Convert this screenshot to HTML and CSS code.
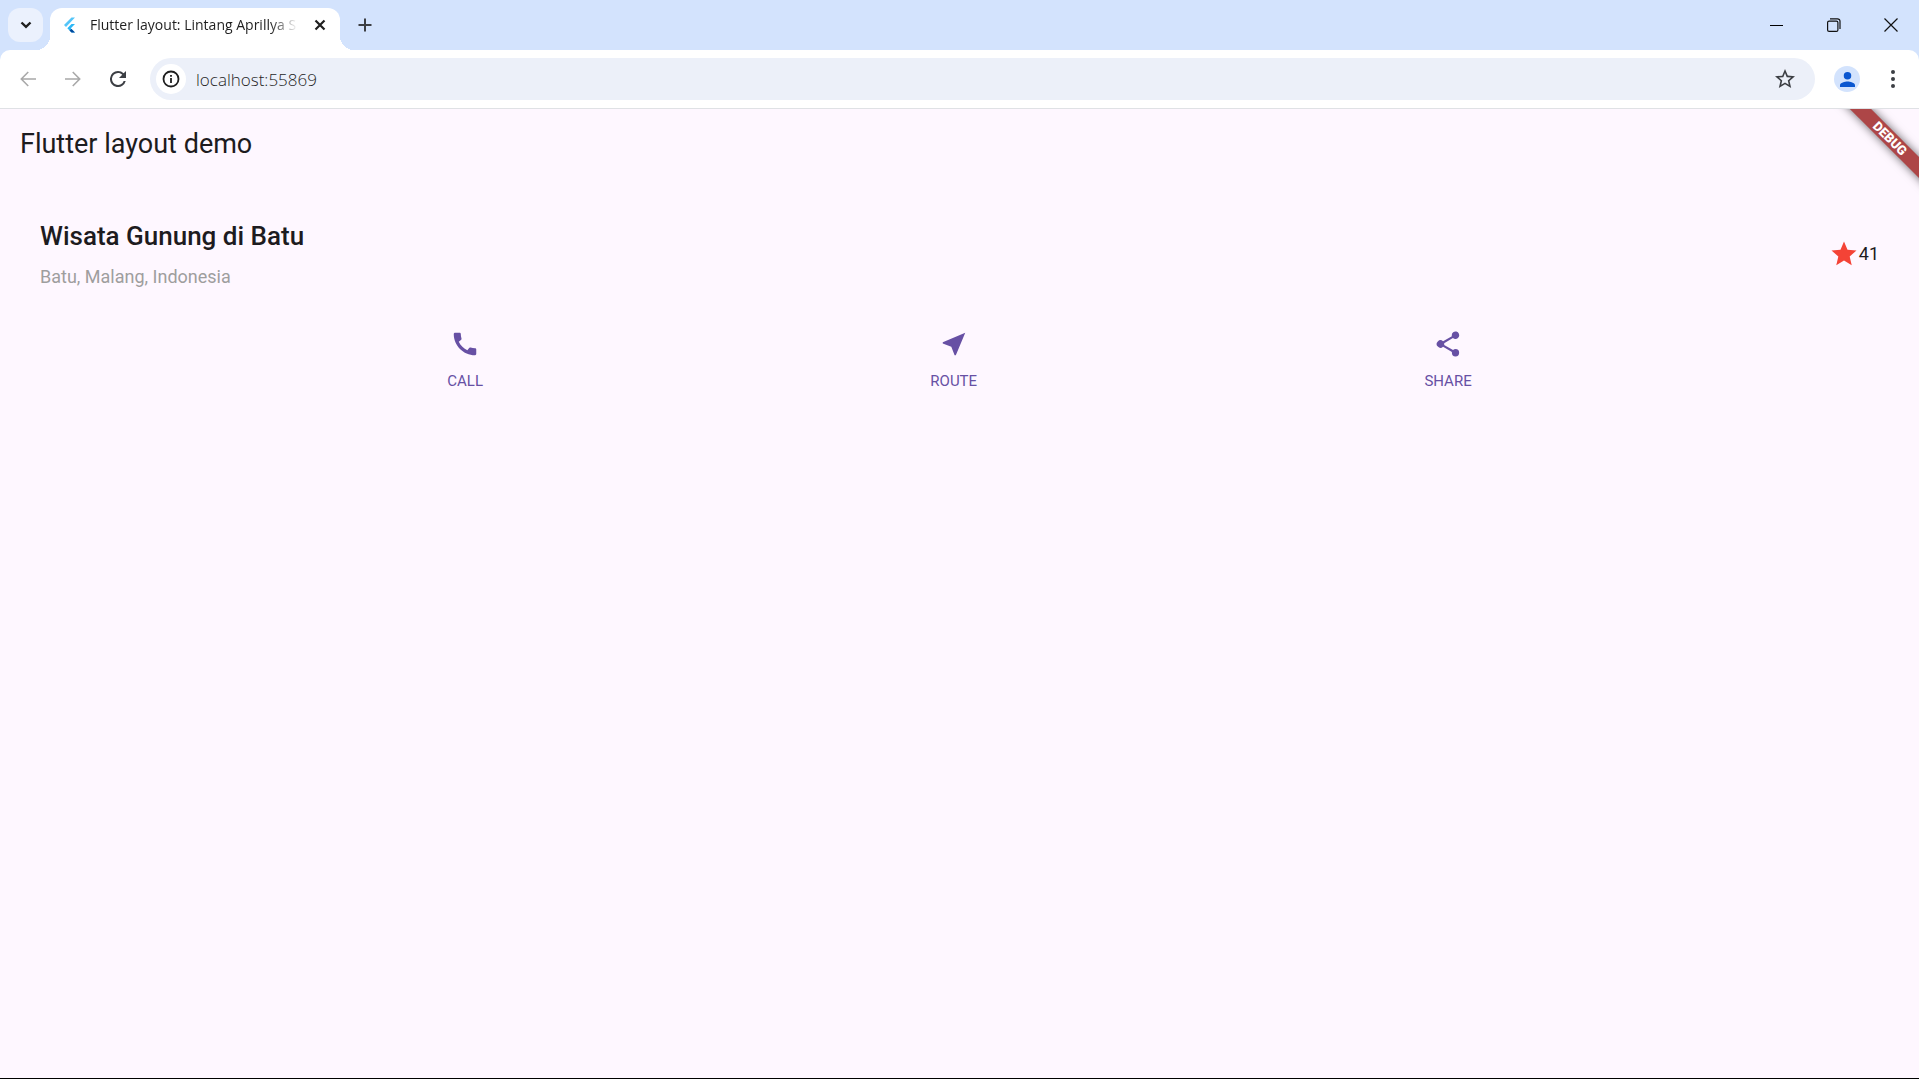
FILE: index.html
```html
<!DOCTYPE html>
<html lang="en">
<head>
<meta charset="utf-8">
<meta name="viewport" content="width=device-width, initial-scale=1">
<title>Flutter layout: Lintang Aprillya S</title>
<link rel="stylesheet" href="styles.css">
</head>
<body>
<header class="browser">
  <div class="tab-strip">
    <button class="tab-search" aria-label="Search tabs"><svg width="12" height="8" viewBox="0 0 12 8"><path d="M1.500 1.500l4.500 4.300 4.500-4.300" fill="none" stroke="#1f1f1f" stroke-width="2.400"/></svg></button>
    <div class="tab">
      <svg class="favicon" width="20" height="20" viewBox="0 0 20 20"><path d="M11.500 2.500H15L6 12 4 10z" fill="#54c5f8"/><path d="M11.500 9H15l-4.200 4.300L15 17.500h-3.500l-4.200-4.200z" fill="#2bb7f6"/><path d="M11.500 17.500H15L11.500 14 9.500 15.500z" fill="#01479b"/></svg>
      <span class="tab-title">Flutter layout: Lintang Aprillya S</span>
      <button class="tab-close" aria-label="Close tab"><svg width="12" height="12" viewBox="0 0 12 12"><path d="M1.500 1.500l9 9M10.500 1.500l-9 9" stroke="#1f1f1f" stroke-width="2.200"/></svg></button>
    </div>
    <button class="new-tab" aria-label="New tab"><svg width="14" height="14" viewBox="0 0 14 14"><path d="M7 .5v13M.5 7h13" stroke="#3c3f44" stroke-width="2"/></svg></button>
    <div class="window-controls">
      <button aria-label="Minimize"><svg width="14" height="14" viewBox="0 0 14 14"><path d="M0 7.500h13" stroke="#000"/></svg></button>
      <button aria-label="Restore"><svg width="14" height="14" viewBox="0 0 14 14" fill="none" stroke="#111" stroke-width="1.200"><rect x=".6" y="3.100" width="10.300" height="10.300" rx="1.500"/><path d="M3 .8h7.500a2.500 2.500 0 0 1 2.500 2.500V11"/></svg></button>
      <button aria-label="Close window"><svg width="14" height="14" viewBox="0 0 14 14"><path d="M.5.5l13 13M13.500.5l-13 13" stroke="#111" stroke-width="1.200"/></svg></button>
    </div>
  </div>
  <div class="toolbar">
    <div class="nav">
      <button aria-label="Back"><svg width="20" height="20" viewBox="4 4 16 16"><path d="M20 11.250H7.100l5.700-5.800L11.700 4.400 4.200 12l7.500 7.600 1.100-1.050-5.700-5.800H20z" fill="#a8a8a8"/></svg></button>
      <button aria-label="Forward"><svg width="20" height="20" viewBox="4 4 16 16"><path d="M4 11.250h12.900l-5.700-5.800 1.100-1.050 7.500 7.600-7.500 7.600-1.100-1.050 5.700-5.800H4z" fill="#a8a8a8"/></svg></button>
      <button aria-label="Reload"><svg width="16" height="16" viewBox="4 4 16 16"><path d="M17.650 6.350A7.960 7.960 0 0 0 12 4a8 8 0 1 0 7.730 10h-2.080A6 6 0 1 1 12 6c1.660 0 3.140.69 4.220 1.780L13 11h7V4z" fill="#3c3f44"/></svg></button>
    </div>
    <div class="address-bar">
      <button class="site-info" aria-label="Site information"><svg width="18" height="18" viewBox="0 0 18 18"><circle cx="9" cy="9" r="7.500" fill="none" stroke="#1f1f1f" stroke-width="1.800"/><path d="M9 8v5M9 5v1.800" stroke="#1f1f1f" stroke-width="1.800"/></svg></button>
      <input class="address" type="text" aria-label="Address" value="localhost:55869">
      <button class="bookmark" aria-label="Bookmark this tab"><svg width="20" height="20" viewBox="2 2 20 20"><path d="M22 9.240l-7.190-.62L12 2 9.190 8.630 2 9.240l5.460 4.730L5.820 21 12 17.270 18.180 21l-1.630-7.030zM12 15.400l-3.760 2.270 1-4.280-3.320-2.880 4.380-.38L12 6.100l1.710 4.040 4.380.38-3.320 2.880 1 4.280z" fill="#3c3f44"/></svg></button>
    </div>
    <button class="profile" aria-label="Profile"><svg width="15" height="15" viewBox="4 4 16 16"><path d="M12 12a4 4 0 1 0 0-8 4 4 0 0 0 0 8zm0 2c-2.670 0-8 1.340-8 4v2h16v-2c0-2.660-5.330-4-8-4z" fill="#0b57d0"/></svg></button>
    <button class="menu" aria-label="Menu"><svg width="4" height="18" viewBox="0 0 4 18" fill="#3c3f44"><circle cx="2" cy="2" r="2"/><circle cx="2" cy="9" r="2"/><circle cx="2" cy="16" r="2"/></svg></button>
  </div>
</header>
<main class="app">
  <div class="debug-corner"><span class="debug-banner">DEBUG</span></div>
  <h1 class="app-title">Flutter layout demo</h1>
  <section class="place">
    <div class="place-text">
      <h2 class="place-name">Wisata Gunung di Batu</h2>
      <p class="place-location">Batu, Malang, Indonesia</p>
    </div>
    <svg width="30" height="30" viewBox="0 0 24 24"><path d="M12 17.270L18.180 21l-1.640-7.030L22 9.240l-7.190-.61L12 2 9.190 8.630 2 9.240l5.460 4.730L5.820 21z" fill="#f44336"/></svg>
    <span class="rating">41</span>
  </section>
  <section class="actions">
    <button class="action"><svg width="30" height="30" viewBox="0 0 24 24"><path d="M20.010 15.380c-1.230 0-2.420-.2-3.530-.56a.977.977 0 0 0-1.010.24l-1.570 1.970c-2.830-1.350-5.480-3.900-6.890-6.830l1.950-1.660c.27-.28.35-.67.240-1.020-.37-1.110-.56-2.300-.56-3.530 0-.54-.45-.99-.99-.99H4.190C3.650 3 3 3.240 3 3.990 3 13.280 10.730 21 20.010 21c.71 0 .99-.63.990-1.180v-3.450c0-.54-.45-.99-.99-.99z"/></svg><span>CALL</span></button>
    <button class="action"><svg width="30" height="30" viewBox="0 0 24 24"><path d="M21 3L3 10.530v.98l6.840 2.650L12.480 21h.98z"/></svg><span>ROUTE</span></button>
    <button class="action"><svg width="30" height="30" viewBox="0 0 24 24"><path d="M18 16.080c-.76 0-1.440.3-1.960.77L8.910 12.700c.05-.23.090-.46.090-.7s-.04-.47-.09-.7l7.050-4.110A2.990 2.990 0 1 0 15 5c0 .24.040.47.090.7L8.040 9.810a3 3 0 1 0 0 4.380l7.120 4.160c-.05.21-.08.430-.08.650a2.920 2.920 0 1 0 2.920-2.920z"/></svg><span>SHARE</span></button>
  </section>
</main>
</body>
</html>
```
FILE: styles.css
```css
* {
  box-sizing: border-box;
}

body {
  margin: 0;
  min-height: 100vh;
  display: flex;
  flex-direction: column;
  background: #fef7ff;
  border-bottom: 1px solid #000;
  font-family: Roboto, sans-serif;
  color: #1d1b20;
}

button {
  display: flex;
  align-items: center;
  justify-content: center;
  margin: 0;
  padding: 0;
  border: 0;
  background: none;
  font: inherit;
  color: inherit;
}

svg {
  display: block;
  flex: none;
}

h1, h2, p {
  margin: 0;
}

/* Browser window */
.browser {
  background: #d3e3fd;
  font-family: "Open Sans", sans-serif;
}

.tab-strip {
  display: flex;
  height: 50px;
  padding: 8px 0 0 8px;
}

.tab-search {
  width: 35px;
  height: 34px;
  margin-right: 7px;
  border-radius: 12px;
  background: #ebf1fd;
}

.tab {
  position: relative;
  display: flex;
  align-items: center;
  width: 290px;
  padding: 0 12px 8px 10px;
  border-radius: 12px 12px 0 0;
  background: #fff;
}

.tab::before,
.tab::after {
  content: "";
  position: absolute;
  bottom: 0;
  width: 14px;
  height: 14px;
}

.tab::before {
  right: 100%;
  background: radial-gradient(circle at 0 0, transparent 14px, #fff 14px);
}

.tab::after {
  left: 100%;
  background: radial-gradient(circle at 100% 0, transparent 14px, #fff 14px);
}

.tab-title {
  flex: 1;
  margin: 0 14px 0 10px;
  overflow: hidden;
  white-space: nowrap;
  font-size: 14px;
  line-height: 20px;
  color: #1f1f1f;
  mask-image: linear-gradient(to left, transparent, #000 28px);
}

.tab-close {
  width: 16px;
  height: 20px;
}

.new-tab {
  width: 34px;
  height: 34px;
  margin-left: 8px;
}

.window-controls {
  display: flex;
  margin-left: auto;
}

.window-controls button {
  width: 57px;
  height: 34px;
}

.toolbar {
  display: flex;
  align-items: center;
  height: 59px;
  padding: 0 24px 0 18px;
  border-bottom: 1px solid #dfe1e5;
  border-radius: 10px 10px 0 0;
  background: #fff;
}

.nav {
  display: flex;
  gap: 25px;
  margin-right: 22px;
}

.nav button {
  width: 20px;
  height: 20px;
}

.nav svg {
  max-width: 16px;
}

.address-bar {
  flex: 1;
  display: flex;
  align-items: center;
  height: 42px;
  padding: 0 20px 0 6px;
  border-radius: 21px;
  background: #ecf0f9;
}

.site-info {
  width: 30px;
  height: 30px;
  border-radius: 50%;
  background: #fff;
}

.address {
  flex: 1;
  min-width: 0;
  margin-left: 10px;
  padding: 0;
  border: 0;
  background: none;
  font-family: "Open Sans", sans-serif;
  font-size: 17px;
  font-weight: 300;
  color: #1f1f1f;
}

.profile {
  width: 26px;
  height: 26px;
  margin: 0 31px 0 19px;
  border-radius: 50%;
  background: #d3e3fd;
}

/* App page */
.app {
  position: relative;
  flex: 1;
}

.app-title {
  padding: 0 20px;
  font-size: 27px;
  font-weight: 400;
  line-height: 70px;
}

.place {
  display: flex;
  align-items: center;
  padding: 40px;
}

.place-text {
  flex: 1;
}

.place-name {
  margin-bottom: 12px;
  font-size: 26px;
  font-weight: 500;
  line-height: 34px;
}

.place-location {
  font-size: 18px;
  line-height: 24px;
  color: #9e9e9e;
}

.rating {
  font-size: 18px;
  line-height: 24px;
}

.actions {
  display: flex;
  justify-content: space-evenly;
}

.action {
  flex-direction: column;
  gap: 10px;
  font-size: 15px;
  line-height: 24px;
  color: #6750a4;
}

.action svg {
  fill: #6750a4;
}

.debug-corner {
  position: absolute;
  top: 0;
  right: 0;
  width: 90px;
  height: 90px;
  overflow: hidden;
}

.debug-banner {
  position: absolute;
  top: 22px;
  right: -41px;
  width: 140px;
  background: #ad4647;
  box-shadow: 0 0 10px rgba(0, 0, 0, 0.6);
  transform: rotate(45deg);
  font-size: 13px;
  font-weight: 900;
  line-height: 15px;
  text-align: center;
  color: #fff;
}
```
